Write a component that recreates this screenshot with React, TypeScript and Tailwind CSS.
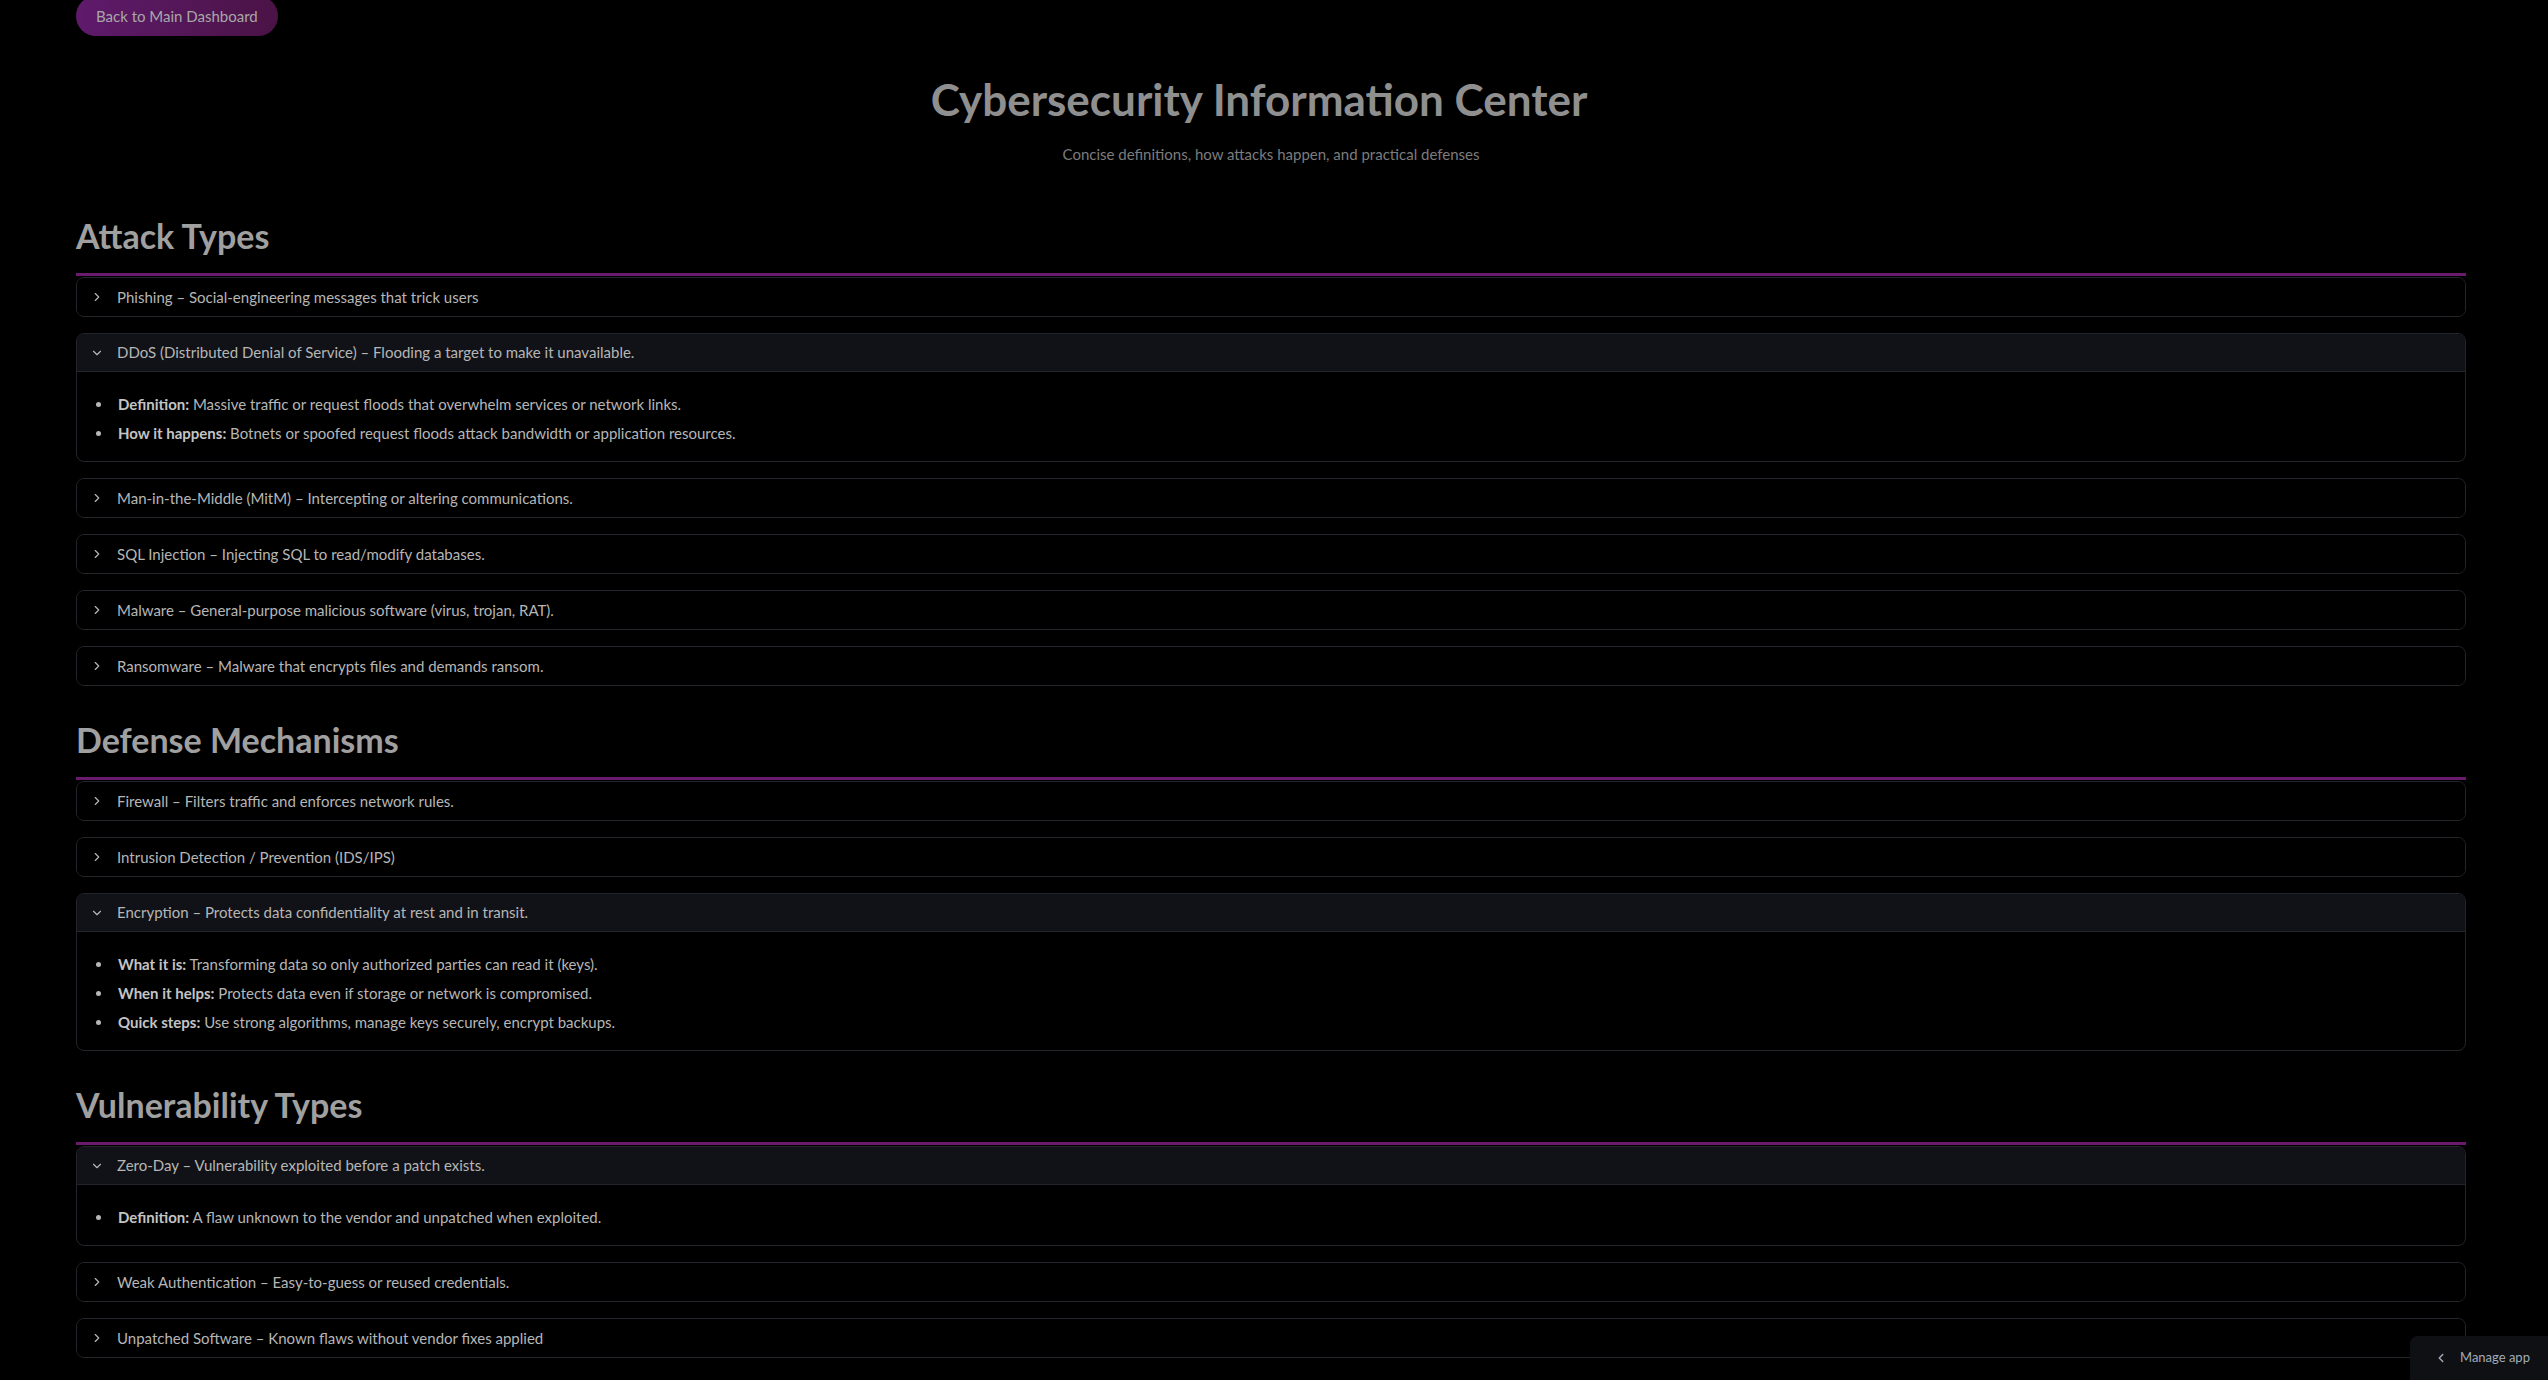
import { ChevronRight, ChevronDown, ChevronLeft } from "lucide-react";

type Bullet = { label: string; text: string };
type Item = { title: string; open?: boolean; bullets?: Bullet[] };

const sections: { heading: string; items: Item[] }[] = [
  {
    heading: "Attack Types",
    items: [
      { title: "Phishing – Social-engineering messages that trick users" },
      {
        title: "DDoS (Distributed Denial of Service) – Flooding a target to make it unavailable.",
        open: true,
        bullets: [
          { label: "Definition:", text: "Massive traffic or request floods that overwhelm services or network links." },
          { label: "How it happens:", text: "Botnets or spoofed request floods attack bandwidth or application resources." },
        ],
      },
      { title: "Man-in-the-Middle (MitM) – Intercepting or altering communications." },
      { title: "SQL Injection – Injecting SQL to read/modify databases." },
      { title: "Malware – General-purpose malicious software (virus, trojan, RAT)." },
      { title: "Ransomware – Malware that encrypts files and demands ransom." },
    ],
  },
  {
    heading: "Defense Mechanisms",
    items: [
      { title: "Firewall – Filters traffic and enforces network rules." },
      { title: "Intrusion Detection / Prevention (IDS/IPS)" },
      {
        title: "Encryption – Protects data confidentiality at rest and in transit.",
        open: true,
        bullets: [
          { label: "What it is:", text: "Transforming data so only authorized parties can read it (keys)." },
          { label: "When it helps:", text: "Protects data even if storage or network is compromised." },
          { label: "Quick steps:", text: "Use strong algorithms, manage keys securely, encrypt backups." },
        ],
      },
    ],
  },
  {
    heading: "Vulnerability Types",
    items: [
      {
        title: "Zero-Day – Vulnerability exploited before a patch exists.",
        open: true,
        bullets: [{ label: "Definition:", text: "A flaw unknown to the vendor and unpatched when exploited." }],
      },
      { title: "Weak Authentication – Easy-to-guess or reused credentials." },
      { title: "Unpatched Software – Known flaws without vendor fixes applied" },
    ],
  },
];

const Expander = ({ item }: { item: Item }) => {
  return (
    <div className="rounded-[8px] border border-[#24252b] overflow-hidden">
      <div
        className={`flex items-center h-[38px] pl-[13px] gap-[13px] text-[15px] text-[#b6b6b6] ${
          item.open ? "bg-[#111217] border-b border-[#24252b]" : "bg-black"
        }`}
      >
        {item.open ? (
          <ChevronDown className="w-[14px] h-[14px] text-[#b6b6b6]" strokeWidth={2} />
        ) : (
          <ChevronRight className="w-[14px] h-[14px] text-[#b6b6b6]" strokeWidth={2} />
        )}
        <span>{item.title}</span>
      </div>
      {item.open && item.bullets && (
        <ul className="pt-[18px] pb-[13px] pl-[19px]">
          {item.bullets.map((b) => (
            <li key={b.label} className="flex items-center leading-[29px] text-[15px] text-[#b6b6b6]">
              <span className="w-[5px] h-[5px] rounded-full bg-[#b6b6b6] mr-[17px]" />
              <span>
                <b className="font-bold text-[#c4c4c4]">{b.label}</b> {b.text}
              </span>
            </li>
          ))}
        </ul>
      )}
    </div>
  );
};

export default function App() {
  return (
    <div className="min-h-screen bg-black font-['Lato',sans-serif] pl-[76px] pr-[82px] pb-[20px]">
      <button className="mt-[-4px] h-[40px] px-[20px] rounded-full bg-gradient-to-r from-[#5f1a6c] to-[#4a1346] text-[15px] text-[#a8a8a8]">
        Back to Main Dashboard
      </button>

      <div className="mt-[37px] flex flex-col items-center">
        <h1 className="text-[44px] leading-[53px] font-bold text-[#8f8f8f] pr-[24px]">
          Cybersecurity Information Center
        </h1>
        <p className="mt-[18px] text-[15px] leading-[20px] text-[#7c7c7c]">
          Concise definitions, how attacks happen, and practical defenses
        </p>
      </div>

      {sections.map((s, i) => (
        <section key={s.heading} className={i === 0 ? "mt-[52px]" : "mt-[34px]"}>
          <h2 className="text-[34px] leading-[40px] font-bold text-[#a0a0a0]">{s.heading}</h2>
          <div className="mt-[17px] h-[3px] bg-[#6a1b6e]" />
          <div className="mt-[1px] flex flex-col gap-[16px]">
            {s.items.map((it) => (
              <Expander key={it.title} item={it} />
            ))}
          </div>
        </section>
      ))}

      <div className="fixed right-0 bottom-0 w-[138px] h-[44px] rounded-tl-[8px] bg-[#0e1014] flex items-center pl-[24px] gap-[12px] text-[13px] text-[#a3abb8]">
        <ChevronLeft className="w-[14px] h-[14px]" strokeWidth={2.5} />
        <span>Manage app</span>
      </div>
    </div>
  );
}
